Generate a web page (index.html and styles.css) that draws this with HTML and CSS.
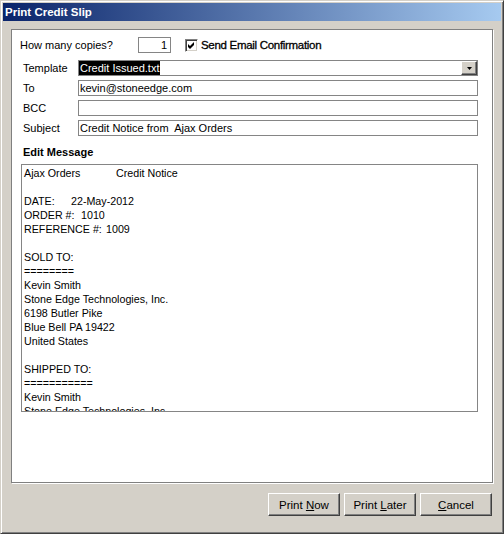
FILE: index.html
```html
<!DOCTYPE html>
<html lang="en">

<head>
    <meta charset="UTF-8">
    <title>Print Credit Slip</title>
    <link rel="stylesheet" href="styles.css">
</head>

<body>
    <div class="window">
        <div class="titlebar">Print Credit Slip</div>
        <div class="client">
            <div class="panel">
                <div class="copies-row">
                    <span class="copies-label">How many copies?</span>
                    <div class="field copies">1</div>
                    <span class="checkbox">
                        <svg width="9" height="9" viewBox="0 0 9 9">
                            <path d="M1 3 L3 5 L7 1 L7 4 L3 8 L1 6 Z" fill="#000"/>
                        </svg>
                    </span>
                    <span class="check-label">Send Email Confirmation</span>
                </div>
                <div class="form-rows">
                    <div class="row">
                        <span class="row-label">Template</span>
                        <div class="field combo">
                            <span class="selected">Credit Issued.txt</span>
                            <span class="drop-btn">
                                <svg width="5" height="3" viewBox="0 0 5 3">
                                    <path d="M0 0 H5 L2.5 3 Z" fill="#000"/>
                                </svg>
                            </span>
                        </div>
                    </div>
                    <div class="row">
                        <span class="row-label">To</span>
                        <div class="field">kevin@stoneedge.com</div>
                    </div>
                    <div class="row">
                        <span class="row-label">BCC</span>
                        <div class="field"></div>
                    </div>
                    <div class="row">
                        <span class="row-label">Subject</span>
                        <div class="field">Credit Notice from&nbsp; Ajax Orders</div>
                    </div>
                </div>
                <div class="section-title">Edit Message</div>
                <div class="message">
                    <div><span class="tab-title">Ajax Orders</span>Credit Notice</div>
                    <div>&nbsp;</div>
                    <div><span class="tab-date">DATE:</span>22-May-2012</div>
                    <div><span class="tab-order">ORDER #:</span>1010</div>
                    <div><span class="tab-ref">REFERENCE #:</span>1009</div>
                    <div>&nbsp;</div>
                    <div>SOLD TO:</div>
                    <div>========</div>
                    <div>Kevin Smith</div>
                    <div>Stone Edge Technologies, Inc.</div>
                    <div>6198 Butler Pike</div>
                    <div>Blue Bell PA 19422</div>
                    <div>United States</div>
                    <div>&nbsp;</div>
                    <div>SHIPPED TO:</div>
                    <div>===========</div>
                    <div>Kevin Smith</div>
                    <div>Stone Edge Technologies, Inc.</div>
                </div>
            </div>
            <div class="buttons">
                <button class="btn">Print <u>N</u>ow</button>
                <button class="btn">Print <u>L</u>ater</button>
                <button class="btn"><u>C</u>ancel</button>
            </div>
        </div>
    </div>
</body>

</html>
```

FILE: styles.css
```css
html,
body {
    margin: 0;
    padding: 0;
}

body {
    font-family: "Liberation Sans", Arial, sans-serif;
    font-size: 11px;
    color: #000;
    background-color: #d4d0c8;
}

.window {
    width: 504px;
    height: 534px;
    box-sizing: border-box;
    border: 1px solid;
    border-color: #d4d0c8 #404040 #404040 #d4d0c8;
    box-shadow: inset 1px 1px #fff, inset -1px -1px #808080;
    padding: 2px;
    display: flex;
    flex-direction: column;
}

.titlebar {
    height: 18px;
    line-height: 18px;
    padding-left: 2px;
    font-weight: bold;
    font-size: 11.5px;
    color: #fff;
    background: linear-gradient(to right, #0a246a, #a6caf0);
}

.client {
    flex: 1;
    display: flex;
    flex-direction: column;
}

.panel {
    margin: 8px 8px 0 8px;
    height: 454px;
    box-sizing: border-box;
    background: #fff;
    border: 1px solid #808080;
    box-shadow: 1px 1px 0 #fff;
    padding: 7px 0 0 0;
}

.copies-row {
    display: flex;
    align-items: center;
    height: 16px;
    padding-left: 8px;
}

.copies-label {
    width: 118px;
}

.field {
    height: 16px;
    box-sizing: border-box;
    border: 1px solid #858585;
    line-height: 14px;
    padding-left: 1px;
    white-space: nowrap;
    overflow: hidden;
}

.copies {
    width: 33px;
    text-align: right;
    padding-right: 3px;
}

.checkbox {
    width: 13px;
    height: 13px;
    box-sizing: border-box;
    margin-left: 14px;
    background: #fff;
    border: 1px solid;
    border-color: #808080 #fff #fff #808080;
    box-shadow: inset 1px 1px #404040, inset -1px -1px #d4d0c8;
    display: flex;
    align-items: center;
    justify-content: center;
}

.checkbox svg {
    display: block;
}

.check-label {
    margin-left: 3px;
    font-size: 11.5px;
    letter-spacing: -0.3px;
    -webkit-text-stroke: 0.3px #000;
}

.form-rows {
    margin-top: 7px;
    display: flex;
    flex-direction: column;
    gap: 4px;
}

.row {
    display: flex;
    align-items: center;
    padding-left: 11px;
}

.row-label {
    width: 55px;
}

.row .field {
    width: 400px;
}

.combo {
    display: flex;
    justify-content: space-between;
    padding-left: 0;
}

.selected {
    background: #000;
    color: #fff;
    padding-left: 1px;
    padding-right: 1px;
}

.drop-btn {
    width: 16px;
    height: 14px;
    box-sizing: border-box;
    background: #d4d0c8;
    border: 1px solid;
    border-color: #fff #404040 #404040 #fff;
    box-shadow: inset -1px -1px #808080;
    display: flex;
    align-items: center;
    justify-content: center;
}

.drop-btn svg {
    display: block;
}

.section-title {
    margin-top: 9px;
    padding-left: 11px;
    font-weight: bold;
    line-height: 14px;
}

.message {
    margin: 5px 0 0 9px;
    width: 457px;
    height: 248px;
    box-sizing: border-box;
    border: 1px solid #858585;
    padding: 1px 0 0 2px;
    line-height: 14px;
    font-size: 10.7px;
    overflow: hidden;
    white-space: nowrap;
}

.tab-title,
.tab-date,
.tab-order,
.tab-ref {
    display: inline-block;
}

.tab-title {
    width: 92px;
}

.tab-date {
    width: 47px;
}

.tab-order {
    width: 57px;
}

.tab-ref {
    width: 82px;
}

.buttons {
    margin: 10px 9px 0 0;
    display: flex;
    justify-content: flex-end;
    gap: 4px;
}

.btn {
    width: 72px;
    height: 23px;
    box-sizing: border-box;
    font-family: "Liberation Sans", Arial, sans-serif;
    font-size: 11.5px;
    color: #000;
    background: #d4d0c8;
    border: 1px solid;
    border-color: #fff #404040 #404040 #fff;
    box-shadow: inset -1px -1px #808080;
    padding: 0;
}
```
